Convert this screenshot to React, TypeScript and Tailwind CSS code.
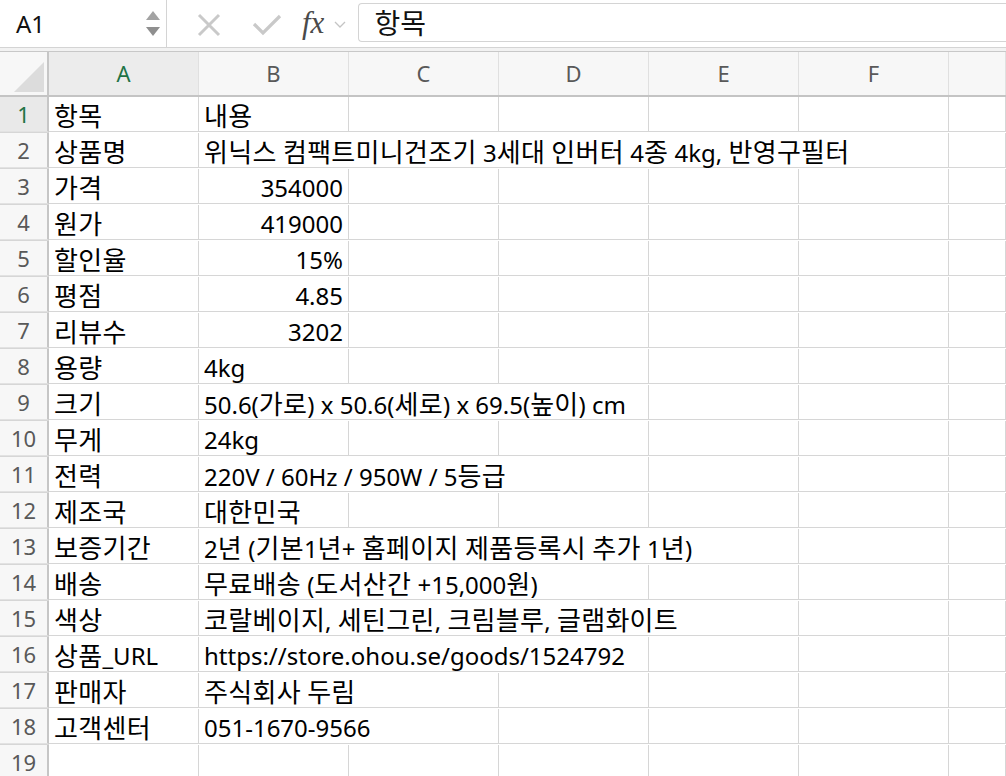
import React from "react";

const rows: { a: string; b: string; span: number; right?: boolean }[] = [
  { a: "항목", b: "내용", span: 1 },
  { a: "상품명", b: "위닉스 컴팩트미니건조기 3세대 인버터 4종 4kg, 반영구필터", span: 5 },
  { a: "가격", b: "354000", span: 1, right: true },
  { a: "원가", b: "419000", span: 1, right: true },
  { a: "할인율", b: "15%", span: 1, right: true },
  { a: "평점", b: "4.85", span: 1, right: true },
  { a: "리뷰수", b: "3202", span: 1, right: true },
  { a: "용량", b: "4kg", span: 1 },
  { a: "크기", b: "50.6(가로) x 50.6(세로) x 69.5(높이) cm", span: 3 },
  { a: "무게", b: "24kg", span: 1 },
  { a: "전력", b: "220V / 60Hz / 950W / 5등급", span: 3 },
  { a: "제조국", b: "대한민국", span: 1 },
  { a: "보증기간", b: "2년 (기본1년+ 홈페이지 제품등록시 추가 1년)", span: 4 },
  { a: "배송", b: "무료배송 (도서산간 +15,000원)", span: 3 },
  { a: "색상", b: "코랄베이지, 세틴그린, 크림블루, 글램화이트", span: 4 },
  { a: "상품_URL", b: "https://store.ohou.se/goods/1524792", span: 3 },
  { a: "판매자", b: "주식회사 두림", span: 2 },
  { a: "고객센터", b: "051-1670-9566", span: 2 },
  { a: "", b: "", span: 1 },
];

const spanClass: Record<number, string> = {
  1: "col-span-1",
  2: "col-span-2",
  3: "col-span-3",
  4: "col-span-4",
  5: "col-span-5",
};

const gridCols = "grid grid-cols-[49px_150px_150px_150px_150px_150px_150px_1fr]";
const font = { fontFamily: '"Noto Sans", "Noto Sans CJK KR", sans-serif' };

function T({ s }: { s: string }) {
  const parts = s.split(/([\uAC00-\uD7A3\u3131-\u318E]+)/);
  return (
    <>
      {parts.map((p, i) =>
        /[\uAC00-\uD7A3\u3131-\u318E]/.test(p) ? (
          <span key={i} className="text-[26px] tracking-[0.3px]">
            {p}
          </span>
        ) : (
          <span key={i}>{p}</span>
        )
      )}
    </>
  );
}

export default function App() {
  return (
    <div className="w-[1006px] h-[776px] overflow-hidden bg-white text-black" style={font}>
      {/* Formula bar */}
      <div className="flex h-[48px] border-b border-[#d4d4d4] bg-white">
        <div className="w-[167px] flex items-center justify-between border-r border-[#d4d4d4] pl-[16px] pr-[6px]">
          <span className="text-[24px] leading-none text-[#111]">A1</span>
          <div className="flex flex-col items-center gap-[7px]">
            <svg width="14" height="9" viewBox="0 0 14 9"><path d="M7 0 L14 9 L0 9 Z" fill="#a3a3a3" /></svg>
            <svg width="14" height="9" viewBox="0 0 14 9"><path d="M0 0 L14 0 L7 9 Z" fill="#8f8f8f" /></svg>
          </div>
        </div>
        <div className="flex items-center pl-[30px]">
          <svg width="24" height="24" viewBox="0 0 24 24" className="mt-[2px]">
            <path d="M2 2 L22 22 M22 2 L2 22" stroke="#c9c9c9" strokeWidth="3" fill="none" />
          </svg>
          <svg width="30" height="22" viewBox="0 0 30 22" className="ml-[31px] mt-[2px]">
            <path d="M2 10 L11 19 L28 2" stroke="#c9c9c9" strokeWidth="3.2" fill="none" />
          </svg>
          <span
            className="ml-[20px] text-[31px] italic leading-none text-[#4a4a4a] mb-[2px]"
            style={{ fontFamily: '"Liberation Serif", "DejaVu Serif", serif' }}
          >
            fx
          </span>
          <svg width="12" height="8" viewBox="0 0 12 8" className="ml-[10px] mt-[3px]">
            <path d="M1 1 L6 6 L11 1" stroke="#c4c4c4" strokeWidth="1.3" fill="none" />
          </svg>
        </div>
        <div className="ml-[12px] mt-[3px] mb-[5px] flex-1 flex items-center rounded-l-[4px] border border-r-0 border-[#d4d4d4] pl-[15px]">
          <span className="text-[28px] leading-none text-[#111]">항목</span>
        </div>
      </div>
      <div className="h-[4px] bg-[#f2f2f2] border-b border-[#c8c8c8]" />

      {/* Column headers */}
      <div className={`${gridCols} h-[45px] border-b-2 border-[#c4c4c4] bg-[#f7f7f7]`}>
        <div className="relative border-r-2 border-[#c6c6c6]">
          <svg width="30" height="30" viewBox="0 0 30 30" className="absolute left-[14px] bottom-[3px]">
            <path d="M30 0 L30 30 L0 30 Z" fill="#dcdcdc" />
          </svg>
        </div>
        {["A", "B", "C", "D", "E", "F", ""].map((c, i) => (
          <div
            key={i}
            className={`flex items-center justify-center border-r border-[#e0e0e0] text-[22px] ${
              c === "A" ? "bg-[#ececec] text-[#217346]" : "text-[#595959]"
            }`}
          >
            {c}
          </div>
        ))}
      </div>

      {/* Rows */}
      {rows.map((r, idx) => {
        const n = idx + 1;
        const after = 6 - r.span;
        return (
          <div key={n} className={`${gridCols} h-[36px]`}>
            <div
              className={`flex items-center justify-center border-r-2 border-b border-r-[#c6c6c6] border-b-[#e2e2e2] text-[22px] pt-[1px] ${
                n === 1 ? "bg-[#e9e9e9] text-[#217346]" : "bg-[#f7f7f7] text-[#595959]"
              }`}
            >
              {n}
            </div>
            <div className="flex items-center border-r border-b border-[#d6d6d6] pl-[5px] pt-[3px] text-[24px] leading-none whitespace-nowrap overflow-visible">
              <T s={r.a} />
            </div>
            <div
              className={`${spanClass[r.span]} flex items-center border-r border-b border-[#d6d6d6] pt-[3px] text-[24px] leading-none whitespace-nowrap ${
                r.right ? "justify-end pr-[5px]" : "pl-[5px]"
              }`}
            >
              <span>
                <T s={r.b} />
              </span>
            </div>
            {Array.from({ length: after }).map((_, j) => (
              <div key={j} className="border-r border-b border-[#d6d6d6]" />
            ))}
            <div className="border-b border-[#d6d6d6]" />
          </div>
        );
      })}
    </div>
  );
}
